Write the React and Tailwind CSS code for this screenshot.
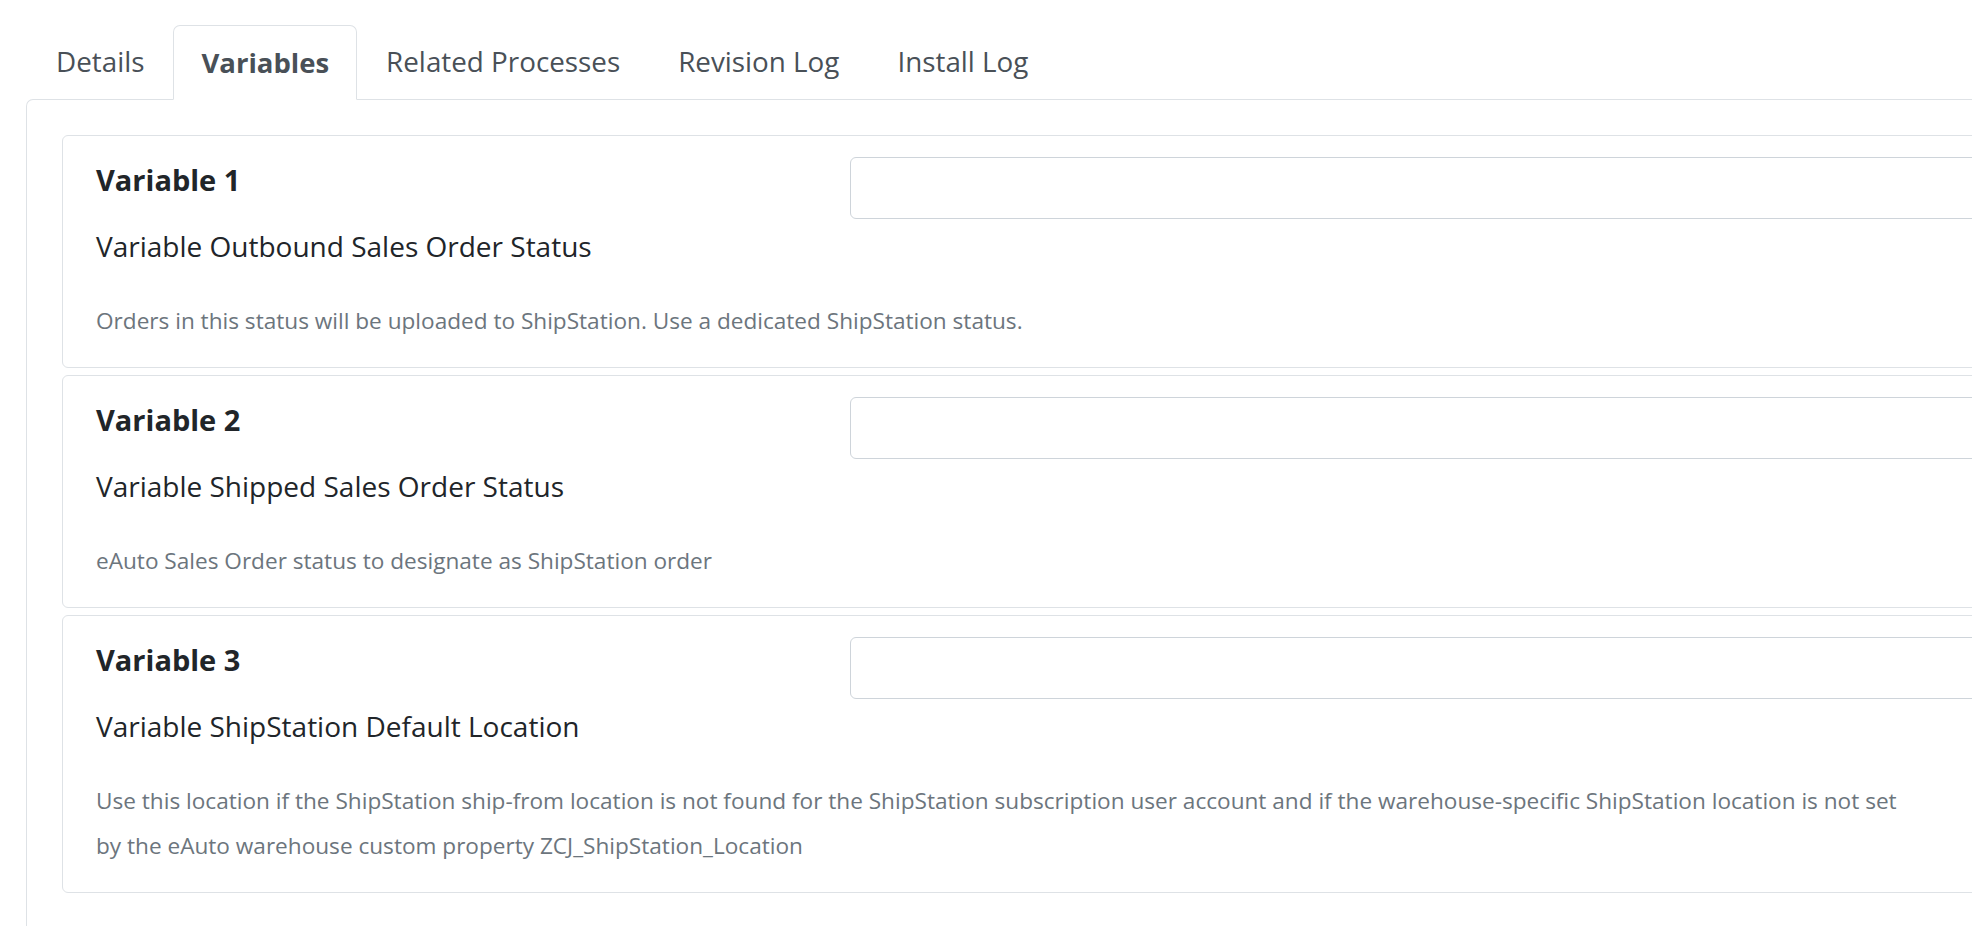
import { useState } from 'react';

const tabs = ['Details', 'Variables', 'Related Processes', 'Revision Log', 'Install Log'];

const variables = [
  {
    id: 1,
    name: 'Variable Outbound Sales Order Status',
    desc: 'Orders in this status will be uploaded to ShipStation. Use a dedicated ShipStation status.',
  },
  {
    id: 2,
    name: 'Variable Shipped Sales Order Status',
    desc: 'eAuto Sales Order status to designate as ShipStation order',
  },
  {
    id: 3,
    name: 'Variable ShipStation Default Location',
    desc: 'Use this location if the ShipStation ship-from location is not found for the ShipStation subscription user account and if the warehouse-specific ShipStation location is not set by the eAuto warehouse custom property ZCJ_ShipStation_Location',
  },
];

export default function App() {
  const [active, setActive] = useState('Variables');

  return (
    <div className="w-screen h-[926px] overflow-hidden bg-white font-['Open_Sans',_'Noto_Sans',_sans-serif]">
      {/* tab strip */}
      <div className="pt-[25px] pl-[27px] w-[2200px]">
        <div className="flex h-[74px]">
          {tabs.map(t => (
            <button
              key={t}
              onClick={() => setActive(t)}
              className={
                t === active
                  ? 'px-[27px] h-[75px] -mb-px border border-[#dee2e6] border-b-white rounded-t-[7px] bg-white text-[27.5px] font-bold text-[#495057] relative z-10'
                  : 'px-[28px] h-[74px] border border-transparent text-[27.8px] text-[#495057]'
              }
            >
              {t}
            </button>
          ))}
        </div>

        {/* panel */}
        <div className="border-l border-t border-[#dee2e6] rounded-tl-[7px] -ml-px pt-[35px] pl-[35px] h-[900px]">
          <div className="flex flex-col gap-[7px]">
            {variables.map(v => (
              <div key={v.id} className="w-[1960px] border border-[#dee2e6] rounded-[6px] pt-[21px] pb-[24px] pl-[33px] pr-[34px]">
                <div className="flex items-start">
                  <h4 className="w-[754px] pt-[3px] text-[29px] leading-[40px] font-bold text-[#212529]">
                    Variable {v.id}
                  </h4>
                  <input className="flex-1 h-[62px] -mr-[200px] border border-[#ced4da] rounded-[6px] outline-none" />
                </div>
                <h5 className="mt-[10px] text-[28px] leading-[34px] text-[#212529]">{v.name}</h5>
                <p className="mt-[35px] max-w-[1826px] text-[22.6px] leading-[45px] text-[#6c757d]">{v.desc}</p>
              </div>
            ))}
          </div>
        </div>
      </div>
    </div>
  );
}
